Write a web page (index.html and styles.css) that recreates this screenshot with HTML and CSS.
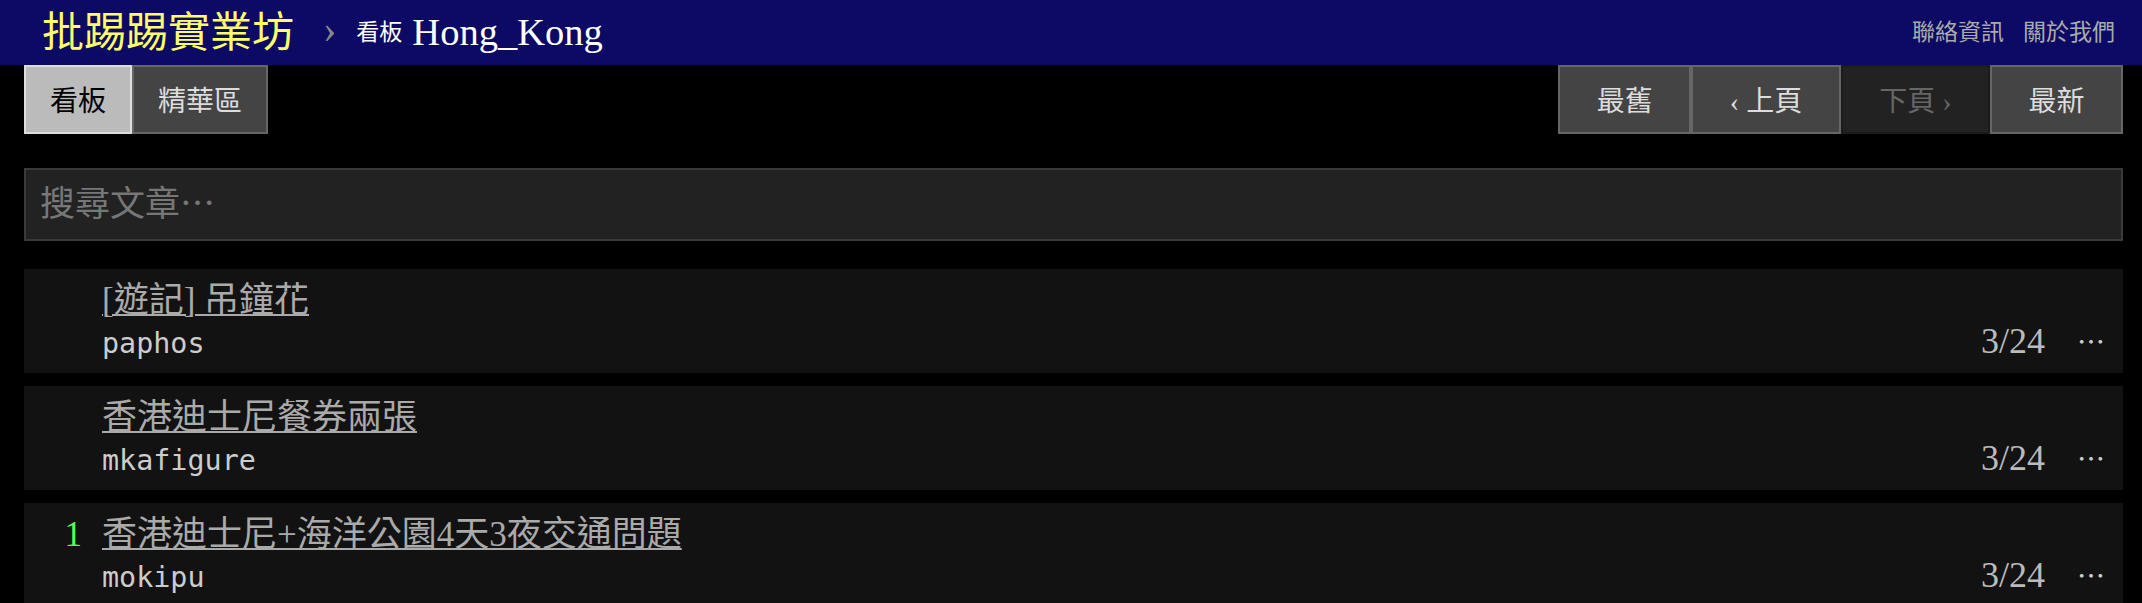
FILE: index.html
```html
<!DOCTYPE html>
<html lang="zh-Hant">
<head>
<meta charset="utf-8">
<title>看板 Hong_Kong 文章列表 - 批踢踢實業坊</title>
<link rel="stylesheet" href="styles.css">
</head>
<body>
<header class="topbar">
  <div class="topbar-left">
    <a class="logo">批踢踢實業坊</a>
    <span class="sep">›</span>
    <a class="board"><span class="board-label">看板</span> Hong_Kong</a>
  </div>
  <nav class="topbar-right">
    <a class="toplink">聯絡資訊</a>
    <a class="toplink">關於我們</a>
  </nav>
</header>

<main class="container">
  <div class="action-bar">
    <div class="btn-group">
      <a class="btn btn-selected">看板</a>
      <a class="btn">精華區</a>
    </div>
    <div class="btn-group">
      <a class="btn btn-wide">最舊</a>
      <a class="btn btn-wide">‹ 上頁</a>
      <a class="btn btn-wide btn-disabled">下頁 ›</a>
      <a class="btn btn-wide">最新</a>
    </div>
  </div>

  <div class="search-bar">
    <input class="search-input" type="text" placeholder="搜尋文章⋯">
  </div>

  <div class="list">
    <div class="r-ent">
      <div class="nrec"></div>
      <div class="ent-main">
        <div class="title"><a>[遊記] 吊鐘花</a></div>
        <div class="meta">
          <span class="author">paphos</span>
          <span class="date">3/24</span>
          <span class="more">⋯</span>
        </div>
      </div>
    </div>
    <div class="r-ent">
      <div class="nrec"></div>
      <div class="ent-main">
        <div class="title"><a>香港迪士尼餐券兩張</a></div>
        <div class="meta">
          <span class="author">mkafigure</span>
          <span class="date">3/24</span>
          <span class="more">⋯</span>
        </div>
      </div>
    </div>
    <div class="r-ent">
      <div class="nrec"><span class="hl-green">1</span></div>
      <div class="ent-main">
        <div class="title"><a>香港迪士尼+海洋公園4天3夜交通問題</a></div>
        <div class="meta">
          <span class="author">mokipu</span>
          <span class="date">3/24</span>
          <span class="more">⋯</span>
        </div>
      </div>
    </div>
  </div>
</main>
</body>
</html>
```

FILE: styles.css
```css
html, body {
  margin: 0;
  padding: 0;
  background: #000;
  color: #ccc;
  font-family: "Liberation Serif", "Noto Sans CJK TC", serif;
}

a {
  text-decoration: none;
  color: inherit;
}

.topbar {
  height: 65px;
  background: #0c0a64;
  display: flex;
  align-items: center;
  justify-content: space-between;
  padding: 0 27px 0 42px;
}

.topbar-left {
  display: flex;
  align-items: center;
}

.logo {
  color: #ffff66;
  font-size: 42px;
  line-height: 1;
}

.sep {
  color: #888;
  font-size: 40px;
  line-height: 1;
  margin: 0 20px 0 29px;
  position: relative;
  top: -4px;
}

.board {
  color: #fff;
  font-size: 38.5px;
  line-height: 1;
  display: flex;
  align-items: center;
}

.board-label {
  font-size: 23px;
  margin-right: 10px;
}

.topbar-right {
  display: flex;
  gap: 19px;
  position: relative;
  top: -3px;
}

.toplink {
  color: #aaa;
  font-size: 23px;
}

.container {
  padding: 0 19px 0 24px;
}

.action-bar {
  display: flex;
  justify-content: space-between;
}

.btn-group {
  display: flex;
}

.btn {
  display: block;
  box-sizing: border-box;
  height: 69px;
  padding: 18px 24px 14px;
  border: 2px solid #666;
  background: #444;
  color: #ddd;
  font-size: 28px;
  line-height: 33px;
  white-space: nowrap;
}

.btn-selected {
  background: #bbb;
  border-color: #ddd;
  color: #000;
}

.btn-wide {
  padding-left: 36.5px;
  padding-right: 36.5px;
}

.btn-disabled {
  background: #222;
  border-color: #1b1b1b;
  color: #666;
}

.search-bar {
  margin-top: 34px;
}

.search-input {
  display: block;
  box-sizing: border-box;
  width: 100%;
  height: 73px;
  margin: 0;
  padding: 0 14px;
  background: #222;
  border: 2px solid #3a3a3a;
  color: #ccc;
  font-family: "Liberation Serif", "Noto Sans CJK TC", serif;
  font-size: 35px;
  outline: none;
}

.search-input::placeholder {
  color: #777;
}

.list {
  margin-top: 28px;
  display: flex;
  flex-direction: column;
  gap: 13px;
}

.r-ent {
  display: flex;
  background: #121212;
  height: 104px;
  box-sizing: border-box;
  padding: 10px 0 10px 0;
}

.nrec {
  width: 78px;
  flex: none;
  box-sizing: border-box;
  padding-right: 20px;
  text-align: right;
  font-size: 35px;
  line-height: 44px;
}

.hl-green {
  color: #55ff55;
}

.ent-main {
  flex: 1;
  min-width: 0;
}

.title {
  font-size: 35px;
  line-height: 44px;
  color: #aaa;
}

.title a {
  text-decoration: underline;
  text-decoration-thickness: 2px;
  text-underline-offset: 2px;
}

.meta {
  display: flex;
  align-items: baseline;
  height: 40px;
  line-height: 40px;
  position: relative;
  top: -2px;
}

.author {
  flex: 1;
  font-family: "DejaVu Sans Mono", monospace;
  font-size: 28.4px;
  color: #ccc;
}

.date {
  font-size: 36px;
  color: #bbb;
}

.more {
  font-family: "Liberation Serif", "Noto Sans CJK TC", serif;
  font-size: 28px;
  color: #ccc;
  margin-left: 32px;
  margin-right: 18px;
  width: 28px;
  text-align: center;
}
```
